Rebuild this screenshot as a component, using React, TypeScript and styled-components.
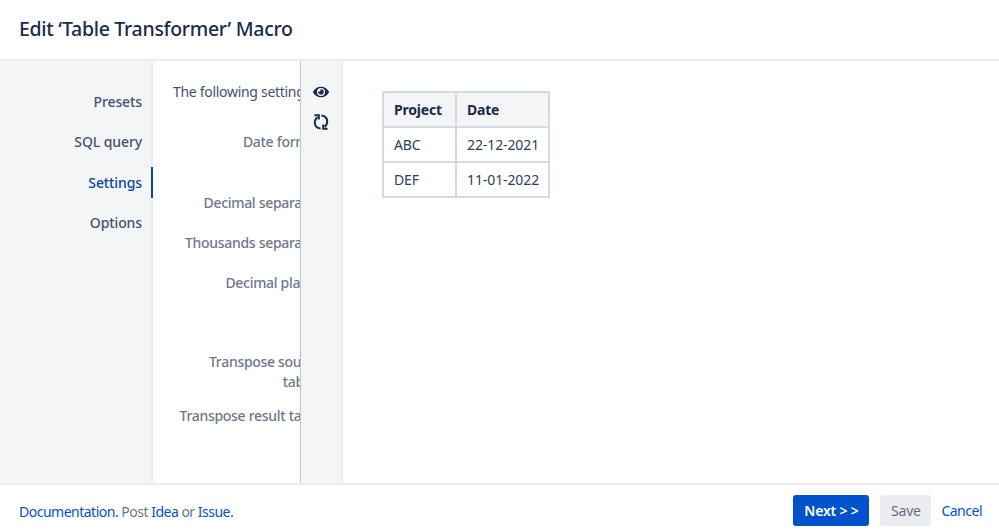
import React from 'react';
import styled, { createGlobalStyle } from 'styled-components';
import { FaEye } from 'react-icons/fa';

const GlobalStyle = createGlobalStyle`
  html, body {
    margin: 0;
    padding: 0;
    background: #ffffff;
    overflow: hidden;
  }
  * {
    box-sizing: border-box;
  }
`;

const Dialog = styled.div`
  width: 999px;
  height: 531px;
  display: flex;
  flex-direction: column;
  font-family: 'Noto Sans', 'Open Sans', sans-serif;
  font-size: 14px;
  letter-spacing: -0.3px;
  line-height: 20px;
  color: #42526e;
`;

const Header = styled.header`
  height: 61px;
  flex: none;
  padding: 16px 19px 0;
  border-bottom: 2px solid #ebecf0;
`;

const Title = styled.h1`
  margin: 0;
  font-size: 19.5px;
  line-height: 26px;
  font-weight: 500;
  letter-spacing: -0.3px;
  color: #172b4d;
`;

const Body = styled.div`
  height: 422px;
  flex: none;
  display: flex;
`;

const Sidebar = styled.nav`
  width: 153px;
  flex: none;
  background: #f4f5f7;
  border-right: 2px solid #ebecf0;
  padding-top: 31px;
  display: flex;
  flex-direction: column;
  gap: 20.3px;
`;

const NavItem = styled.div<{ $active?: boolean }>`
  position: relative;
  height: 20px;
  padding-right: 9px;
  text-align: right;
  letter-spacing: -0.1px;
  font-weight: 500;
  color: ${props => (props.$active ? '#0747a6' : '#42526e')};
  &::after {
    content: ${props => (props.$active ? "''" : 'none')};
    position: absolute;
    right: -2px;
    top: -6px;
    width: 2px;
    height: 31px;
    background: #0747a6;
  }
`;

const SettingsPanel = styled.section`
  width: 147px;
  flex: none;
  overflow: hidden;
  padding: 21px 0 0 20px;
`;

const Intro = styled.div`
  width: 400px;
  color: #42526e;
`;

const FieldLabel = styled.div<{ $top: number }>`
  width: 142px;
  margin-top: ${props => props.$top}px;
  margin-left: 6px;
  font-weight: 500;
  text-align: right;
  color: #6b778c;
`;

const WrappedWord = styled.span`
  display: inline-block;
  padding-right: 6px;
`;

const ToolStrip = styled.div`
  width: 43px;
  flex: none;
  background: #f4f5f7;
  border-left: 1px solid #c1c7d0;
  border-right: 2px solid #ebecf0;
  padding-top: 22px;
  display: flex;
  flex-direction: column;
  align-items: center;
  gap: 12px;
  color: #172b4d;
`;

const ToolIcon = styled.div`
  width: 18px;
  height: 18px;
  display: flex;
  align-items: center;
  justify-content: center;
`;

const Preview = styled.main`
  flex: 1;
  padding: 30px 0 0 39px;
`;

const ResultTable = styled.table`
  border-collapse: collapse;
  table-layout: fixed;
  width: 166px;
  letter-spacing: 0;
  color: #172b4d;
`;

const HeadCell = styled.th<{ $width: number }>`
  width: ${props => props.$width}px;
  height: 35px;
  padding: 0 10px;
  text-align: left;
  font-weight: 700;
  letter-spacing: -0.2px;
  background: #f4f5f7;
  border: 2px solid #d5d9e1;
`;

const Cell = styled.td`
  height: 35px;
  padding: 1px 0 0 10px;
  white-space: nowrap;
  letter-spacing: -0.1px;
  color: #2c3e5d;
  border: 2px solid #d5d9e1;
`;

const Footer = styled.footer`
  flex: 1;
  border-top: 2px solid #ebecf0;
  display: flex;
  align-items: center;
  padding: 11px 17px 4px 19px;
  letter-spacing: -0.5px;
`;

const FooterText = styled.div`
  flex: 1;
  color: #6b778c;
`;

const Link = styled.a`
  color: #0052cc;
  text-decoration: none;
`;

const PrimaryButton = styled.button`
  width: 76px;
  height: 31px;
  margin-top: -2px;
  border: none;
  border-radius: 3px;
  background: #0052cc;
  color: #ffffff;
  font: inherit;
  font-weight: 600;
  letter-spacing: -0.2px;
`;

const SecondaryButton = styled.button`
  width: 51px;
  height: 31px;
  margin-top: -2px;
  margin-left: 11px;
  border: none;
  border-radius: 3px;
  background: #ebecf0;
  color: #5e6c84;
  font: inherit;
  letter-spacing: -0.2px;
`;

const CancelLink = styled(Link)`
  margin-left: 10px;
  margin-top: -2px;
`;

const RefreshIcon = () => (
  <svg width="16" height="18" viewBox="0 0 16 18" fill="none" stroke="currentColor" strokeWidth="2">
    <path d="M7.6 15.6C4.2 15.2 1.8 13 1.8 9.6c0-2.2 1-4.2 2.6-5.4" />
    <path d="M8.4 2.4c3.4.4 5.8 2.6 5.8 6 0 2.2-1 4.2-2.6 5.4" />
    <path d="M1.4 2.2h4.4v4.4" />
    <path d="M14.6 15.8h-4.4v-4.4" />
  </svg>
);

const fields = [
  { label: 'Date format', top: 30 },
  { label: 'Decimal separator', top: 41 },
  { label: 'Thousands separator', top: 20 },
  { label: 'Decimal places', top: 20 },
  { label: <>Transpose source <WrappedWord>table</WrappedWord></>, top: 59 },
  { label: 'Transpose result table', top: 14 },
];

export default function App() {
  return (
    <Dialog>
      <GlobalStyle />
      <Header>
        <Title>Edit ‘Table Transformer’ Macro</Title>
      </Header>
      <Body>
        <Sidebar>
          <NavItem>Presets</NavItem>
          <NavItem>SQL query</NavItem>
          <NavItem $active>Settings</NavItem>
          <NavItem>Options</NavItem>
        </Sidebar>
        <SettingsPanel>
          <Intro>The following settings are applied</Intro>
          {fields.map((f, i) => (
            <FieldLabel key={i} $top={f.top}>{f.label}</FieldLabel>
          ))}
        </SettingsPanel>
        <ToolStrip>
          <ToolIcon><FaEye size={16} /></ToolIcon>
          <ToolIcon><RefreshIcon /></ToolIcon>
        </ToolStrip>
        <Preview>
          <ResultTable>
            <thead>
              <tr>
                <HeadCell $width={73}>Project</HeadCell>
                <HeadCell $width={93}>Date</HeadCell>
              </tr>
            </thead>
            <tbody>
              <tr><Cell>ABC</Cell><Cell>22-12-2021</Cell></tr>
              <tr><Cell>DEF</Cell><Cell>11-01-2022</Cell></tr>
            </tbody>
          </ResultTable>
        </Preview>
      </Body>
      <Footer>
        <FooterText>
          <Link>Documentation.</Link> Post <Link>Idea</Link> or <Link>Issue.</Link>
        </FooterText>
        <PrimaryButton>Next &gt; &gt;</PrimaryButton>
        <SecondaryButton>Save</SecondaryButton>
        <CancelLink>Cancel</CancelLink>
      </Footer>
    </Dialog>
  );
}
